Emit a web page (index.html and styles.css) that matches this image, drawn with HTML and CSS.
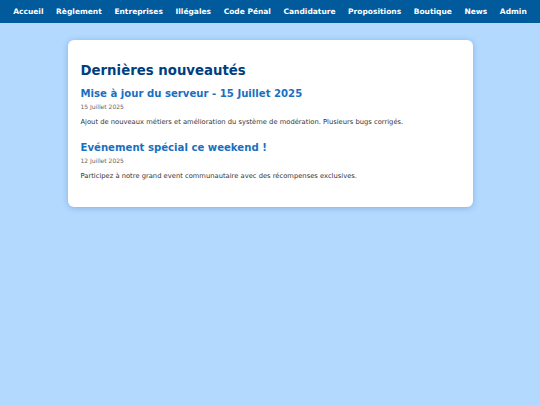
FILE: index.html
```html
<!DOCTYPE html>
<html lang="fr">
<head>
<meta charset="utf-8">
<link rel="stylesheet" href="styles.css">
</head>
<body>
<nav class="nav">
  <a href="#">Accueil</a>
  <a href="#">Règlement</a>
  <a href="#">Entreprises</a>
  <a href="#">Illégales</a>
  <a href="#">Code Pénal</a>
  <a href="#">Candidature</a>
  <a href="#">Propositions</a>
  <a href="#">Boutique</a>
  <a href="#">News</a>
  <a href="#">Admin</a>
</nav>
<main class="card">
  <h1 class="title">Dernières nouveautés</h1>
  <article class="news">
    <h2 class="news-title">Mise à jour du serveur - 15 Juillet 2025</h2>
    <div class="news-date">15 Juillet 2025</div>
    <p class="news-text">Ajout de nouveaux métiers et amélioration du système de modération. Plusieurs bugs corrigés.</p>
  </article>
  <article class="news">
    <h2 class="news-title">Evénement spécial ce weekend !</h2>
    <div class="news-date">12 Juillet 2025</div>
    <p class="news-text">Participez à notre grand event communautaire avec des récompenses exclusives.</p>
  </article>
</main>
</body>
</html>
```
FILE: styles.css
```css
html, body {
  margin: 0;
  padding: 0;
}
body {
  background: #b3d9ff;
  font-family: "DejaVu Sans", Verdana, sans-serif;
  min-height: 405px;
}
.nav {
  background: #005a9c;
  display: flex;
  justify-content: center;
  height: 23px;
  align-items: center;
}
.nav a {
  color: #ffffff;
  text-decoration: none;
  font-weight: bold;
  font-size: 7.5px;
  padding: 0 6.3px;
  white-space: nowrap;
}
.card {
  background: #ffffff;
  width: 405px;
  margin: 17px auto 0;
  border-radius: 6px;
  box-shadow: 0 1px 6px rgba(0, 60, 120, 0.25);
  padding: 23px 13px 27px;
  box-sizing: border-box;
}
.title {
  font-size: 13.3px;
  line-height: 16px;
  color: #003f7f;
  margin: 0 0 8px;
}
.news-title {
  font-size: 10.15px;
  line-height: 13px;
  color: #1a6fc0;
  margin: 0 0 3px;
}
.news-date {
  font-size: 6px;
  line-height: 8px;
  color: #666666;
  margin-bottom: 7px;
}
.news-text {
  font-size: 6.75px;
  line-height: 8px;
  color: #333333;
  margin: 0 0 15px;
}
.news:last-child .news-text {
  margin-bottom: 0;
}
```
